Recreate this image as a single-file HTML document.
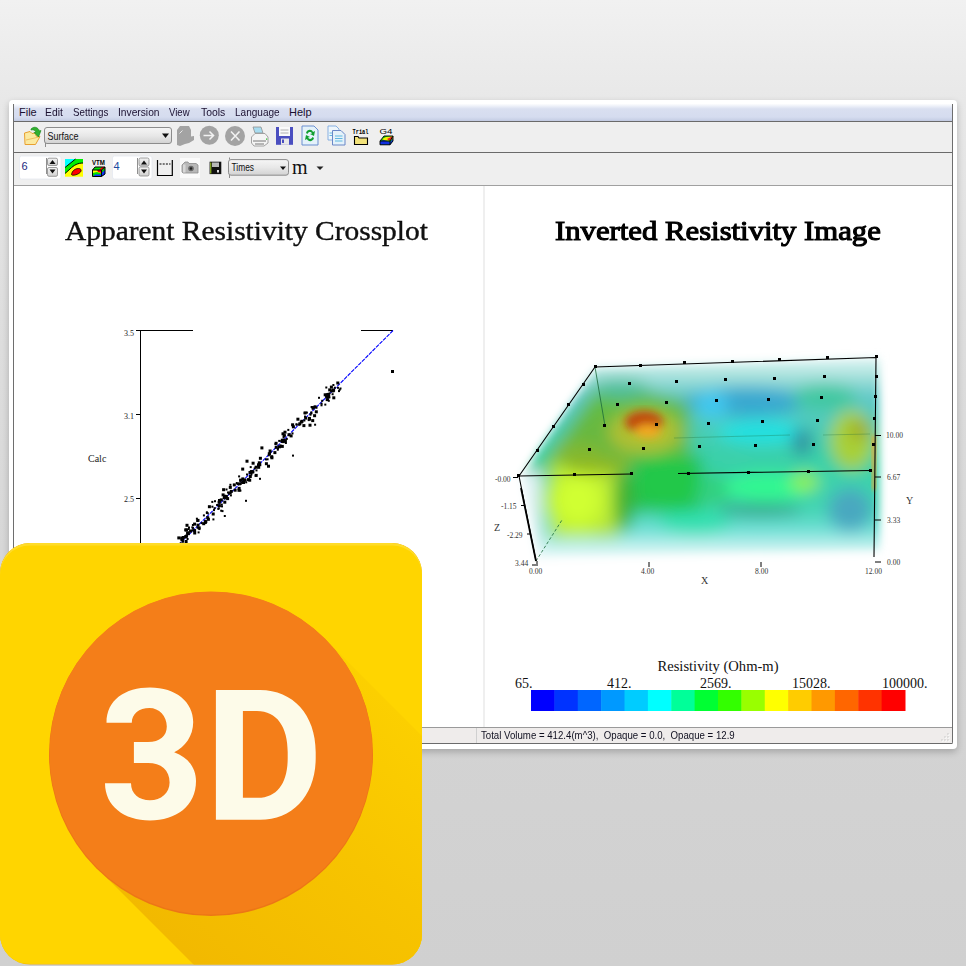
<!DOCTYPE html>
<html><head><meta charset="utf-8">
<style>
*{margin:0;padding:0;box-sizing:border-box}
html,body{width:966px;height:966px;overflow:hidden}
body{position:relative;background:linear-gradient(180deg,#f1f1f1 0px,#e8e8e8 100px,#dedede 315px,#d4d4d4 650px,#d0d0d0 966px);font-family:"Liberation Sans",sans-serif}
.a{position:absolute}
#win{left:9px;top:100px;width:948px;height:649px;background:#fff;border-radius:4px;box-shadow:0 3px 7px rgba(0,0,0,0.22)}
#frame{left:13px;top:104px;width:940px;height:640px;border-left:1px solid #6e6e6e;border-right:1px solid #6e6e6e;border-bottom:1px solid #6e6e6e;background:#fff;border-bottom-right-radius:2px}
#menu{left:14px;top:104px;width:938px;height:17px;background:linear-gradient(180deg,#fcfcfe 0,#eef1f9 2px,#d9dff0 5px,#d5dcef 13px,#c8d0e6 16px,#c0c8e0 17px)}
.mi{position:absolute;top:106px;font-size:11px;color:#1a1030;line-height:12px}
#l1{left:14px;top:121px;width:938px;height:1px;background:#6a6a6a}
#tb1{left:14px;top:122px;width:938px;height:30px;background:#efefef}
#l2{left:14px;top:152px;width:938px;height:1px;background:#6a6a6a}
#tb2{left:14px;top:153px;width:938px;height:32px;background:#efefef}
#l3{left:14px;top:185px;width:938px;height:1px;background:#a0a0a0}
#div{left:483px;top:186px;width:2px;height:541px;background:#efefef}
#l4{left:14px;top:727px;width:938px;height:1px;background:#9a9a9a}
#sb{left:14px;top:728px;width:938px;height:15px;background:#efeceb}
#l5{left:14px;top:743px;width:938px;height:1px;background:#6b6b6b}
.serif{font-family:"Liberation Serif",serif}
</style></head><body>
<div class="a" id="win"></div>
<div class="a" id="frame"></div>
<div class="a" id="menu"></div>
<div class="mi" style="left:19px;transform:scaleX(1.0);transform-origin:0 0">File</div>
<div class="mi" style="left:45px;transform:scaleX(0.94);transform-origin:0 0">Edit</div>
<div class="mi" style="left:73px;transform:scaleX(0.89);transform-origin:0 0">Settings</div>
<div class="mi" style="left:117.5px;transform:scaleX(0.93);transform-origin:0 0">Inversion</div>
<div class="mi" style="left:168.5px;transform:scaleX(0.87);transform-origin:0 0">View</div>
<div class="mi" style="left:200.5px;transform:scaleX(0.945);transform-origin:0 0">Tools</div>
<div class="mi" style="left:235px;transform:scaleX(0.913);transform-origin:0 0">Language</div>
<div class="mi" style="left:289px;transform:scaleX(1.0);transform-origin:0 0">Help</div>
<div class="a" id="l1"></div>
<div class="a" id="tb1"></div>
<div class="a" id="l2"></div>
<div class="a" id="tb2"></div>
<div class="a" id="l3"></div>
<div class="a" id="div"></div>
<div class="a" id="l4"></div>
<div class="a" id="sb"></div>
<div class="a" id="l5"></div>


<!-- CROSSPLOT -->
<svg class="a" style="left:0;top:0" width="966" height="966" id="cross">
 <g fill="none" stroke="#000" stroke-width="1">
  <path d="M140.5 330 V560 M136 330.5 H193 M361 330.5 H393 M136 414.5 H140 M136 498.5 H140"/>
 </g>
 <line x1="393" y1="330.5" x2="170" y2="553.5" stroke="#0000ff" stroke-width="1.1" stroke-dasharray="4,1"/>
 <g fill="#000"><rect x="227.9" y="492.7" width="2" height="2"/><rect x="195.9" y="517.7" width="2" height="2"/><rect x="267.8" y="452.2" width="3" height="3"/><rect x="284.9" y="442.0" width="2" height="2"/><rect x="305.9" y="411.6" width="2" height="2"/><rect x="181.9" y="537.1" width="2" height="2"/><rect x="244.5" y="479.4" width="2" height="2"/><rect x="185.8" y="544.3" width="2" height="2"/><rect x="186.6" y="538.0" width="2" height="2"/><rect x="237.5" y="488.8" width="3" height="3"/><rect x="250.3" y="472.2" width="2" height="2"/><rect x="287.5" y="433.2" width="3" height="3"/><rect x="330.2" y="389.6" width="2" height="2"/><rect x="255.5" y="469.4" width="2" height="2"/><rect x="207.9" y="505.2" width="3" height="3"/><rect x="189.2" y="529.5" width="3" height="3"/><rect x="197.7" y="526.4" width="3" height="3"/><rect x="246.0" y="473.5" width="2" height="2"/><rect x="280.8" y="444.9" width="3" height="3"/><rect x="308.5" y="423.7" width="3" height="3"/><rect x="326.9" y="392.9" width="3" height="3"/><rect x="308.0" y="417.6" width="3" height="3"/><rect x="202.2" y="522.2" width="3" height="3"/><rect x="311.8" y="406.1" width="3" height="3"/><rect x="307.9" y="416.9" width="3" height="3"/><rect x="180.4" y="538.3" width="3" height="3"/><rect x="265.0" y="458.4" width="2" height="2"/><rect x="228.7" y="491.4" width="3" height="3"/><rect x="324.3" y="403.6" width="2" height="2"/><rect x="211.7" y="512.5" width="3" height="3"/><rect x="282.7" y="434.2" width="3" height="3"/><rect x="222.1" y="488.2" width="3" height="3"/><rect x="274.7" y="445.7" width="3" height="3"/><rect x="273.4" y="451.1" width="3" height="3"/><rect x="184.2" y="528.4" width="3" height="3"/><rect x="180.2" y="536.6" width="3" height="3"/><rect x="184.2" y="535.3" width="3" height="3"/><rect x="296.4" y="417.7" width="3" height="3"/><rect x="278.2" y="439.9" width="2" height="2"/><rect x="295.4" y="423.3" width="2" height="2"/><rect x="225.5" y="488.5" width="2" height="2"/><rect x="197.6" y="531.4" width="2" height="2"/><rect x="267.0" y="464.7" width="3" height="3"/><rect x="339.5" y="387.5" width="2" height="2"/><rect x="223.3" y="500.7" width="3" height="3"/><rect x="313.6" y="405.3" width="3" height="3"/><rect x="204.3" y="520.1" width="3" height="3"/><rect x="249.7" y="466.1" width="2" height="2"/><rect x="181.5" y="542.5" width="2" height="2"/><rect x="270.4" y="456.3" width="3" height="3"/><rect x="227.0" y="491.5" width="2" height="2"/><rect x="250.4" y="473.5" width="2" height="2"/><rect x="232.8" y="483.4" width="3" height="3"/><rect x="330.2" y="390.3" width="2" height="2"/><rect x="254.7" y="473.9" width="3" height="3"/><rect x="323.7" y="393.3" width="3" height="3"/><rect x="291.5" y="432.4" width="2" height="2"/><rect x="213.0" y="509.1" width="2" height="2"/><rect x="331.7" y="388.9" width="3" height="3"/><rect x="211.3" y="500.9" width="2" height="2"/><rect x="328.6" y="392.4" width="2" height="2"/><rect x="331.4" y="389.4" width="3" height="3"/><rect x="196.6" y="526.8" width="2" height="2"/><rect x="188.0" y="526.5" width="2" height="2"/><rect x="218.0" y="499.0" width="3" height="3"/><rect x="303.6" y="411.4" width="3" height="3"/><rect x="245.2" y="481.3" width="2" height="2"/><rect x="205.9" y="512.0" width="2" height="2"/><rect x="179.7" y="542.3" width="2" height="2"/><rect x="233.6" y="488.7" width="3" height="3"/><rect x="221.0" y="505.4" width="2" height="2"/><rect x="320.6" y="402.7" width="2" height="2"/><rect x="282.6" y="436.4" width="2" height="2"/><rect x="329.9" y="385.6" width="3" height="3"/><rect x="185.2" y="534.9" width="2" height="2"/><rect x="236.5" y="483.1" width="2" height="2"/><rect x="283.8" y="434.3" width="2" height="2"/><rect x="204.1" y="519.8" width="2" height="2"/><rect x="216.1" y="504.0" width="2" height="2"/><rect x="193.1" y="522.6" width="3" height="3"/><rect x="259.0" y="477.8" width="2" height="2"/><rect x="184.4" y="535.3" width="2" height="2"/><rect x="177.3" y="536.4" width="3" height="3"/><rect x="268.6" y="449.5" width="3" height="3"/><rect x="206.9" y="517.8" width="3" height="3"/><rect x="202.9" y="514.4" width="2" height="2"/><rect x="211.4" y="505.7" width="2" height="2"/><rect x="298.3" y="422.3" width="3" height="3"/><rect x="336.3" y="381.5" width="3" height="3"/><rect x="274.5" y="443.0" width="2" height="2"/><rect x="270.2" y="455.2" width="3" height="3"/><rect x="311.7" y="407.8" width="2" height="2"/><rect x="254.7" y="474.7" width="2" height="2"/><rect x="218.5" y="500.4" width="2" height="2"/><rect x="206.8" y="512.3" width="2" height="2"/><rect x="325.7" y="393.2" width="3" height="3"/><rect x="186.2" y="532.1" width="3" height="3"/><rect x="280.2" y="440.1" width="2" height="2"/><rect x="300.5" y="419.8" width="3" height="3"/><rect x="338.7" y="388.7" width="2" height="2"/><rect x="328.3" y="396.5" width="2" height="2"/><rect x="223.8" y="515.0" width="2" height="2"/><rect x="250.6" y="470.5" width="3" height="3"/><rect x="292.0" y="454.6" width="2" height="2"/><rect x="217.6" y="500.8" width="3" height="3"/><rect x="212.4" y="518.4" width="2" height="2"/><rect x="196.5" y="523.7" width="3" height="3"/><rect x="259.0" y="462.6" width="2" height="2"/><rect x="189.2" y="530.2" width="2" height="2"/><rect x="242.0" y="481.0" width="3" height="3"/><rect x="203.8" y="521.0" width="3" height="3"/><rect x="182.0" y="540.6" width="2" height="2"/><rect x="326.9" y="398.6" width="2" height="2"/><rect x="320.5" y="404.3" width="2" height="2"/><rect x="193.2" y="531.5" width="3" height="3"/><rect x="303.7" y="412.1" width="2" height="2"/><rect x="218.7" y="501.6" width="2" height="2"/><rect x="274.6" y="441.8" width="3" height="3"/><rect x="281.1" y="441.0" width="2" height="2"/><rect x="313.1" y="414.2" width="3" height="3"/><rect x="181.8" y="536.0" width="3" height="3"/><rect x="295.8" y="423.7" width="2" height="2"/><rect x="217.8" y="507.3" width="2" height="2"/><rect x="251.6" y="461.7" width="3" height="3"/><rect x="239.4" y="489.6" width="2" height="2"/><rect x="243.3" y="478.5" width="3" height="3"/><rect x="222.7" y="497.2" width="2" height="2"/><rect x="249.9" y="470.1" width="3" height="3"/><rect x="200.7" y="522.1" width="2" height="2"/><rect x="269.1" y="451.2" width="2" height="2"/><rect x="228.8" y="485.9" width="3" height="3"/><rect x="260.4" y="446.4" width="3" height="3"/><rect x="193.1" y="529.1" width="3" height="3"/><rect x="191.9" y="524.0" width="2" height="2"/><rect x="310.6" y="406.0" width="2" height="2"/><rect x="278.0" y="445.3" width="3" height="3"/><rect x="239.5" y="479.9" width="2" height="2"/><rect x="242.3" y="479.8" width="2" height="2"/><rect x="282.5" y="438.9" width="3" height="3"/><rect x="279.5" y="444.4" width="2" height="2"/><rect x="332.3" y="396.3" width="3" height="3"/><rect x="220.8" y="503.6" width="2" height="2"/><rect x="251.4" y="470.3" width="3" height="3"/><rect x="266.6" y="458.3" width="2" height="2"/><rect x="185.1" y="528.5" width="3" height="3"/><rect x="287.3" y="428.9" width="2" height="2"/><rect x="193.8" y="530.0" width="2" height="2"/><rect x="221.6" y="493.4" width="3" height="3"/><rect x="258.9" y="456.8" width="3" height="3"/><rect x="264.9" y="462.2" width="3" height="3"/><rect x="331.6" y="393.2" width="2" height="2"/><rect x="257.8" y="461.3" width="3" height="3"/><rect x="217.3" y="507.9" width="2" height="2"/><rect x="277.0" y="447.4" width="2" height="2"/><rect x="187.7" y="528.0" width="2" height="2"/><rect x="298.3" y="423.7" width="2" height="2"/><rect x="235.8" y="482.0" width="2" height="2"/><rect x="220.2" y="509.7" width="2" height="2"/><rect x="268.9" y="453.1" width="2" height="2"/><rect x="245.5" y="459.7" width="3" height="3"/><rect x="337.0" y="386.8" width="2" height="2"/><rect x="248.5" y="471.0" width="3" height="3"/><rect x="333.8" y="386.7" width="2" height="2"/><rect x="187.8" y="533.1" width="2" height="2"/><rect x="237.6" y="486.9" width="3" height="3"/><rect x="327.8" y="399.8" width="2" height="2"/><rect x="307.7" y="419.1" width="2" height="2"/><rect x="241.3" y="477.4" width="3" height="3"/><rect x="309.5" y="413.7" width="2" height="2"/><rect x="325.3" y="386.5" width="2" height="2"/><rect x="327.2" y="394.9" width="3" height="3"/><rect x="247.0" y="478.1" width="3" height="3"/><rect x="248.8" y="475.0" width="3" height="3"/><rect x="198.4" y="528.1" width="2" height="2"/><rect x="291.1" y="423.3" width="3" height="3"/><rect x="185.5" y="523.8" width="3" height="3"/><rect x="304.2" y="416.6" width="3" height="3"/><rect x="291.9" y="425.3" width="3" height="3"/><rect x="332.4" y="384.0" width="2" height="2"/><rect x="318.0" y="396.8" width="2" height="2"/><rect x="224.5" y="495.4" width="3" height="3"/><rect x="310.3" y="411.4" width="2" height="2"/><rect x="332.1" y="388.6" width="3" height="3"/><rect x="275.2" y="446.5" width="2" height="2"/><rect x="283.9" y="439.2" width="3" height="3"/><rect x="238.1" y="475.4" width="2" height="2"/><rect x="281.5" y="432.3" width="3" height="3"/><rect x="224.3" y="497.4" width="2" height="2"/><rect x="241.2" y="467.6" width="3" height="3"/><rect x="191.8" y="529.2" width="2" height="2"/><rect x="223.2" y="495.3" width="3" height="3"/><rect x="181.6" y="542.9" width="2" height="2"/><rect x="229.9" y="494.4" width="2" height="2"/><rect x="187.8" y="531.6" width="2" height="2"/><rect x="254.6" y="465.7" width="3" height="3"/><rect x="325.1" y="394.8" width="3" height="3"/><rect x="182.1" y="538.6" width="2" height="2"/><rect x="285.8" y="437.9" width="2" height="2"/><rect x="214.0" y="500.2" width="2" height="2"/><rect x="229.4" y="483.8" width="2" height="2"/><rect x="338.0" y="390.1" width="2" height="2"/><rect x="328.2" y="388.4" width="3" height="3"/><rect x="245.0" y="499.8" width="2" height="2"/><rect x="326.8" y="396.5" width="2" height="2"/><rect x="184.6" y="540.0" width="3" height="3"/><rect x="289.6" y="434.4" width="3" height="3"/><rect x="253.7" y="467.4" width="2" height="2"/><rect x="257.2" y="465.8" width="3" height="3"/><rect x="229.8" y="489.9" width="3" height="3"/><rect x="303.4" y="419.5" width="2" height="2"/><rect x="304.0" y="415.6" width="2" height="2"/><rect x="237.9" y="482.3" width="3" height="3"/><rect x="280.8" y="438.7" width="3" height="3"/><rect x="249.6" y="471.0" width="2" height="2"/><rect x="276.8" y="448.7" width="2" height="2"/><rect x="325.7" y="398.1" width="3" height="3"/><rect x="314.8" y="410.3" width="3" height="3"/><rect x="221.5" y="510.1" width="2" height="2"/><rect x="206.2" y="516.2" width="3" height="3"/><rect x="321.2" y="399.8" width="2" height="2"/><rect x="219.8" y="498.4" width="3" height="3"/><rect x="315.5" y="406.7" width="2" height="2"/><rect x="226.1" y="497.1" width="3" height="3"/><rect x="240.6" y="481.7" width="2" height="2"/><rect x="267.8" y="454.3" width="2" height="2"/><rect x="311.2" y="419.1" width="3" height="3"/><rect x="239.7" y="483.0" width="2" height="2"/><rect x="213.6" y="507.2" width="2" height="2"/><rect x="310.4" y="412.4" width="2" height="2"/><rect x="257.0" y="463.3" width="3" height="3"/><rect x="283.5" y="430.7" width="3" height="3"/><rect x="311.7" y="406.7" width="2" height="2"/><rect x="239.1" y="478.6" width="3" height="3"/><rect x="192.0" y="526.9" width="2" height="2"/><rect x="191.3" y="526.4" width="2" height="2"/><rect x="281.9" y="440.1" width="3" height="3"/><rect x="185.0" y="534.7" width="3" height="3"/><rect x="196.5" y="518.9" width="3" height="3"/><rect x="217.9" y="504.2" width="3" height="3"/><rect x="223.0" y="494.8" width="3" height="3"/><rect x="325.6" y="395.8" width="2" height="2"/><rect x="299.8" y="420.5" width="3" height="3"/><rect x="224.8" y="494.9" width="3" height="3"/><rect x="186.3" y="531.4" width="3" height="3"/><rect x="258.3" y="463.2" width="3" height="3"/><rect x="205.9" y="511.3" width="2" height="2"/><rect x="314.1" y="423.7" width="2" height="2"/><rect x="302.4" y="424.1" width="3" height="3"/><rect x="248.2" y="478.7" width="3" height="3"/><rect x="196.3" y="520.0" width="2" height="2"/><rect x="391" y="370" width="3" height="3"/></g>
 <g font-family="Liberation Serif" font-size="8" fill="#222">
  <text x="124" y="336">3.5</text><text x="124" y="418.5">3.1</text><text x="124" y="502">2.5</text>
  <text x="88" y="462" font-size="10">Calc</text>
 </g>
</svg>

<!-- 3D PLOT -->
<svg class="a" style="left:0;top:0" width="966" height="966" id="vol">
 <defs>
  <filter id="bl" x="-20%" y="-20%" width="140%" height="140%"><feGaussianBlur stdDeviation="8"/></filter>
  <filter id="bl2" x="-20%" y="-20%" width="140%" height="140%"><feGaussianBlur stdDeviation="4"/></filter>
  <filter id="bl3" x="-50%" y="-20%" width="200%" height="140%"><feGaussianBlur stdDeviation="2"/></filter>
  <linearGradient id="vg" gradientUnits="userSpaceOnUse" x1="0" y1="355" x2="0" y2="560">
   <stop offset="0" stop-color="#e8f8f8"/><stop offset="0.1" stop-color="#a8e2dc"/><stop offset="0.2" stop-color="#60c8c8"/><stop offset="0.5" stop-color="#38d0a8"/><stop offset="0.75" stop-color="#40d4b0"/><stop offset="0.86" stop-color="#70e0d8"/><stop offset="0.95" stop-color="#d0f4f2"/><stop offset="1" stop-color="#f4fcfc"/></linearGradient>
  <mask id="vm" maskUnits="userSpaceOnUse" x="480" y="330" width="440" height="260">
    <polygon points="521,476 596,367 880,357 880,552 537,559" fill="#fff" filter="url(#bl2)"/>
  </mask>
 </defs>
 
 <g mask="url(#vm)">
  <g filter="url(#bl)">
   <rect x="470" y="340" width="420" height="240" fill="url(#vg)"/>
   <polygon points="538,472 597,386 640,390 690,402 690,462" fill="#62bc44"/>
   <ellipse cx="600" cy="440" rx="30" ry="25" fill="#68b840"/>
   <ellipse cx="620" cy="388" rx="28" ry="10" fill="#50c0a0"/>
   <ellipse cx="578" cy="452" rx="26" ry="10" fill="#80b830"/>
   <ellipse cx="745" cy="402" rx="60" ry="15" fill="#38a8d0"/>
   <ellipse cx="712" cy="405" rx="16" ry="14" fill="#40c8f0"/>
   <ellipse cx="762" cy="432" rx="45" ry="13" fill="#20e0e0"/>
   <ellipse cx="825" cy="397" rx="32" ry="13" fill="#40c8a0"/>
   <ellipse cx="802" cy="442" rx="10" ry="14" fill="#3090a0"/>
   <ellipse cx="645" cy="432" rx="36" ry="22" fill="#b0c030"/>
   <ellipse cx="852" cy="440" rx="22" ry="30" fill="#a8d038"/>
   <ellipse cx="860" cy="430" rx="10" ry="10" fill="#a0a820"/>
   <rect x="550" y="462" width="68" height="76" fill="#b0e040"/>
   <ellipse cx="578" cy="500" rx="34" ry="38" fill="#c0f030"/>
   <ellipse cx="578" cy="500" rx="22" ry="24" fill="#d0ff30"/>
   <ellipse cx="598" cy="466" rx="36" ry="8" fill="#90b820"/>
   <ellipse cx="624" cy="500" rx="10" ry="32" fill="#40b030"/>
   <rect x="632" y="456" width="70" height="56" fill="#28c050"/>
   <ellipse cx="712" cy="490" rx="22" ry="16" fill="#30d080"/>
   <ellipse cx="668" cy="482" rx="32" ry="28" fill="#20c848"/>
   <ellipse cx="695" cy="522" rx="36" ry="12" fill="#30e0b0"/>
   <ellipse cx="768" cy="487" rx="44" ry="14" fill="#30f890"/>
   <ellipse cx="805" cy="482" rx="14" ry="10" fill="#90f050"/>
   <ellipse cx="760" cy="510" rx="42" ry="7" fill="#38a890"/>
   <ellipse cx="850" cy="510" rx="22" ry="22" fill="#48a8c0"/>
   <polygon points="478,476 596,342 556,342 468,440" fill="#eaf8f8"/>
   <rect x="468" y="470" width="72" height="110" fill="#e8f4f8"/>
   <polygon points="470,350 520,350 520,476 536,560 470,560" fill="#eaf8f8"/>
  </g>
  <g filter="url(#bl2)">
   <ellipse cx="644" cy="422" rx="19" ry="11" fill="#c04a10"/>
   <ellipse cx="648" cy="431" rx="13" ry="7" fill="#f0a820"/>
  </g>
 </g>
 <polygon points="872.5,436 875.5,436 875.5,490 872.5,490" fill="#f0a020" filter="url(#bl3)"/>
 <g fill="none" stroke="#000" stroke-width="1.1">
  <path d="M519 476 L595 367 L876 357.5 L874 557 M519 476 L536 561 M519 476 L631.5 474 M678 473.5 L871 470.5"/>
 </g>
 <g fill="none" stroke="#1a6a3a" stroke-width="0.8">
  <path d="M595 367 L605 426" /><path d="M674 438 L790 435 M823 435 L870 434" stroke-opacity="0.5" stroke-width="0.6"/>
  <path d="M536 561 L562 520" stroke-dasharray="3,2"/>
 </g>
 <g fill="#000">
  <rect x="639" y="364" width="3" height="3"/><rect x="683" y="361" width="3" height="3"/><rect x="731" y="360" width="3" height="3"/><rect x="778" y="358" width="3" height="3"/><rect x="826" y="356" width="3" height="3"/><rect x="875" y="355" width="3" height="3"/>
  <rect x="536" y="449" width="3" height="3"/><rect x="552" y="425" width="3" height="3"/><rect x="567" y="403" width="3" height="3"/><rect x="582" y="383" width="3" height="3"/><rect x="594" y="365" width="3" height="3"/>
  <rect x="628" y="382" width="3" height="3"/><rect x="675" y="380" width="3" height="3"/><rect x="724" y="378" width="3" height="3"/><rect x="773" y="377" width="3" height="3"/><rect x="823" y="375" width="3" height="3"/>
  <rect x="616" y="403" width="3" height="3"/><rect x="665" y="401" width="3" height="3"/><rect x="715" y="399" width="3" height="3"/><rect x="767" y="398" width="3" height="3"/><rect x="820" y="396" width="3" height="3"/>
  <rect x="603" y="424" width="3" height="3"/><rect x="655" y="423" width="3" height="3"/><rect x="707" y="422" width="3" height="3"/><rect x="761" y="420" width="3" height="3"/><rect x="816" y="419" width="3" height="3"/>
  <rect x="588" y="448" width="3" height="3"/><rect x="642" y="447" width="3" height="3"/><rect x="698" y="445" width="3" height="3"/><rect x="754" y="444" width="3" height="3"/><rect x="812" y="443" width="3" height="3"/>
  <rect x="573" y="473" width="3" height="3"/><rect x="630" y="472" width="3" height="3"/><rect x="687" y="472" width="3" height="3"/><rect x="747" y="471" width="3" height="3"/><rect x="807" y="470" width="3" height="3"/><rect x="869" y="469" width="3" height="3"/>
  <rect x="517" y="474" width="3" height="3"/>
  <rect x="875" y="375" width="3" height="3"/><rect x="874" y="395" width="3" height="3"/><rect x="873" y="417" width="3" height="3"/><rect x="872" y="443" width="3" height="3"/>
 </g>
 <g font-family="Liberation Serif" font-size="7.5" fill="#333">
  <text x="495" y="481.5">-0.00</text><text x="501" y="509">-1.15</text><text x="507" y="538">-2.29</text><text x="515" y="566">3.44</text>
  <text x="494" y="531" font-size="10">Z</text>
  <text x="529" y="574">0.00</text><text x="641" y="574">4.00</text><text x="755" y="574">8.00</text><text x="865" y="574">12.00</text>
  <text x="701" y="584" font-size="10">X</text>
  <text x="886" y="438">10.00</text><text x="887" y="480">6.67</text><text x="887" y="523">3.33</text><text x="887" y="565">0.00</text>
  <text x="906" y="504" font-size="10">Y</text>
 </g>
 <g stroke="#000" stroke-width="1" fill="none"><path d="M875 435.5 H881 M875 477 H881 M875 520 H881 M875 562 H881 M649 562 V567 M761 562 V567 M513 477.5 H518 M521 505.5 H525 M527 534 H531 M532 565 H536 M537 561 V566"/><path d="M521 488 L536 561" stroke-width="1.8"/></g>
</svg>

<!-- COLORBAR -->
<svg class="a" style="left:0;top:0" width="966" height="966" id="cbar"><g font-family="Liberation Serif" font-size="14" fill="#111">
  <text x="657.5" y="671" textLength="121" lengthAdjust="spacingAndGlyphs">Resistivity (Ohm-m)</text>
  <text x="515" y="688">65.</text><text x="607" y="688">412.</text><text x="700" y="688">2569.</text><text x="792" y="688">15028.</text><text x="882" y="688">100000.</text>
 </g>
<rect x="531.00" y="690" width="23.88" height="21" fill="#0000ff"/><rect x="554.38" y="690" width="23.88" height="21" fill="#0033ff"/><rect x="577.75" y="690" width="23.88" height="21" fill="#0066ff"/><rect x="601.12" y="690" width="23.88" height="21" fill="#0099ff"/><rect x="624.50" y="690" width="23.88" height="21" fill="#00ccff"/><rect x="647.88" y="690" width="23.88" height="21" fill="#00ffff"/><rect x="671.25" y="690" width="23.88" height="21" fill="#00ff99"/><rect x="694.62" y="690" width="23.88" height="21" fill="#00ff33"/><rect x="718.00" y="690" width="23.88" height="21" fill="#33ff00"/><rect x="741.38" y="690" width="23.88" height="21" fill="#99ff00"/><rect x="764.75" y="690" width="23.88" height="21" fill="#ffff00"/><rect x="788.12" y="690" width="23.88" height="21" fill="#ffcc00"/><rect x="811.50" y="690" width="23.88" height="21" fill="#ff9900"/><rect x="834.88" y="690" width="23.88" height="21" fill="#ff6600"/><rect x="858.25" y="690" width="23.88" height="21" fill="#ff3300"/><rect x="881.62" y="690" width="23.88" height="21" fill="#ff0000"/>
 </svg>
<div class="a" style="left:476px;top:728px;width:1px;height:15px;background:#d0d0d0"></div>
<div class="a" style="left:481px;top:730px;font-size:10px;line-height:12px;color:#101020;white-space:nowrap;transform:scaleX(0.965);transform-origin:0 0">Total Volume = 412.4(m^3),&nbsp; Opaque = 0.0,&nbsp; Opaque = 12.9</div>

<svg class="a" style="left:938px;top:732px" width="14" height="11"><g fill="#fff"><rect x="10" y="2" width="1.5" height="1.5"/><rect x="7" y="5" width="1.5" height="1.5"/><rect x="10" y="5" width="1.5" height="1.5"/><rect x="4" y="8" width="1.5" height="1.5"/><rect x="7" y="8" width="1.5" height="1.5"/><rect x="10" y="8" width="1.5" height="1.5"/></g><g fill="#a8a8a8"><rect x="9.5" y="1.5" width="1" height="1"/><rect x="6.5" y="4.5" width="1" height="1"/><rect x="9.5" y="4.5" width="1" height="1"/><rect x="3.5" y="7.5" width="1" height="1"/><rect x="6.5" y="7.5" width="1" height="1"/><rect x="9.5" y="7.5" width="1" height="1"/></g></svg>
<!-- TOOLBARS -->
<svg class="a" style="left:0;top:0" width="966" height="200" id="tools">
 <defs>
  <linearGradient id="cbg" x1="0" y1="0" x2="0" y2="1"><stop offset="0" stop-color="#f6f6f6"/><stop offset="0.5" stop-color="#e8e8e8"/><stop offset="1" stop-color="#d2d2d2"/></linearGradient>
  <linearGradient id="spg" x1="0" y1="0" x2="0" y2="1"><stop offset="0" stop-color="#f4f4f4"/><stop offset="1" stop-color="#d0d0d0"/></linearGradient>
 </defs>
 <!-- folder open -->
 <path d="M24.5 133 L30 131.5 L32 133.5 L36 133 L36 136 L40 136.5 L35.5 144.5 L25 144.5 Z" fill="#fbe9a0" stroke="#e8a030" stroke-width="1"/>
 <path d="M26 140 L39 137" stroke="#f0c060" stroke-width="1"/>
 <path d="M31 129 C34 126, 38 127, 39.5 131 L41 130.5 L38.5 137 L34 132.5 L36 132 C35 130, 33 129.5, 31 130 Z" fill="#30b030" stroke="#108010" stroke-width="0.6"/>
 <!-- combobox Surface -->
 <rect x="44.5" y="127.5" width="127" height="16" rx="2.5" fill="url(#cbg)" stroke="#8c8c8c"/>
 <path d="M45.5 143 V147" stroke="#8c8c8c"/>
 <text x="47.5" y="139.5" font-family="Liberation Sans" font-size="10.5" fill="#111" textLength="31" lengthAdjust="spacingAndGlyphs">Surface</text>
 <path d="M162 133.5 H169 L165.5 138 Z" fill="#111"/>
 <!-- gray head -->
 <path d="M177 130 L180 126 H189 L191 130 L191 136.5 L194 136 L194 140 L189 143 L185 144 L180 146 L177 145 Z" fill="#a3a3a3"/>
 <path d="M179.5 133.5 L182.5 130.5" stroke="#e8e8e8" stroke-width="1"/>
 <!-- gray circle arrow -->
 <circle cx="209.3" cy="135.3" r="9.5" fill="#a3a3a3"/>
 <path d="M203.5 135.5 H213 M209.5 131.5 L213.5 135.5 L209.5 139.5" stroke="#f2f2f2" stroke-width="1.6" fill="none"/>
 <!-- gray circle x -->
 <circle cx="235" cy="136" r="10" fill="#a3a3a3"/>
 <path d="M231 131.5 L239.5 140.5 M239.5 131.5 L231 140.5" stroke="#f2f2f2" stroke-width="1.6"/>
 <!-- printer -->
 <path d="M253 127 H261 L263 133 H255 Z" fill="#a8dcf0" stroke="#909090" stroke-width="0.8"/>
 <path d="M251.5 137 L255 133.5 H265 L268 137 V143 L264 146 H254 L251.5 143 Z" fill="#f4f4f4" stroke="#9a9a9a" stroke-width="0.9"/>
 <path d="M253 141 H266 M255 144 H264" stroke="#6a6a6a" stroke-width="0.9"/>
 <rect x="266" y="138.5" width="1.2" height="1.2" fill="#20c020"/>
 <!-- floppy blue -->
 <rect x="276" y="127" width="17" height="17.8" fill="#4b4fc0"/>
 <rect x="279" y="127" width="11" height="9" fill="#fafafa"/>
 <path d="M280.5 130 H288.5 M280.5 133 H288.5" stroke="#a0a0a0" stroke-width="0.8"/>
 <rect x="281" y="138.5" width="8" height="6.3" fill="#e8e8e8"/>
 <rect x="282" y="139.5" width="2" height="3.5" fill="#4b4fc0"/>
 <!-- refresh doc -->
 <path d="M302 126 H314 L318 130 V145 H302 Z" fill="#e4f2fa" stroke="#6a8fd0" stroke-width="1"/>
 <path d="M306 133 C307 129, 312 129, 313 132 L315 131 L314 136 L310 134 L312 133.5 C311 131.5, 308.5 131.5, 307.5 134 Z" fill="#10a030"/>
 <path d="M314 138 C313 142, 308 142, 307 139 L305 140 L306 135 L310 137 L308 137.5 C309 139.5, 311.5 139.5, 312.5 137 Z" fill="#10a030"/>
 <!-- copy doc -->
 <path d="M328 126 H336 L339 129 V140 H328 Z" fill="#eef6fc" stroke="#7aa8e0" stroke-width="0.9"/>
 <path d="M332.5 130.5 H341 L345 134.5 V145 H332.5 Z" fill="#e4f2fa" stroke="#6a88c8" stroke-width="1"/>
 <path d="M335 136 H342.5 M335 138.5 H342.5 M335 141 H342.5 M329.5 133 H332 M329.5 135.5 H332" stroke="#60b8e0" stroke-width="1"/>
 <!-- Trial -->
 <text x="352.5" y="134" font-family="Liberation Mono" font-size="7.5" font-weight="bold" fill="#000" textLength="16" lengthAdjust="spacingAndGlyphs">Trial</text>
 <path d="M354.5 144.5 V136.5 H358 L359 138 H367.5 V144.5 Z" fill="#f2e27a" stroke="#000" stroke-width="1.1"/>
 <!-- G4 -->
 <text x="379.5" y="134" font-family="Liberation Sans" font-size="8" fill="#000" textLength="13" lengthAdjust="spacingAndGlyphs">G4</text>
 <path d="M380 141 L384 136 H393 V141 L390 144.8 H380 Z" fill="#10c010"/>
 <path d="M380 144.8 V141.5 L384 140 L390 142 L393 139 V141 L390 144.8 Z" fill="#1030e0"/>
 <path d="M382 139 L386 137 L393 136 L392 139 L388 141 L384 140 Z" fill="#f0f000"/>
 <path d="M387 139 L392 136.5 L392.5 139 L389 140.5 Z" fill="#f02020"/>
 <path d="M380 144.8 V141 L384 136 H393 V141 L390 144.8 Z M390 144.8 V141 H380 M390 141 L393 136" fill="none" stroke="#000" stroke-width="0.9"/>

 <!-- toolbar 2 -->
 <rect x="19.5" y="156" width="41.5" height="23" rx="2" fill="#fff" stroke="#e4e8f0" stroke-width="0.8"/>
 <text x="21.5" y="169.5" font-family="Liberation Sans" font-size="11" fill="#1a2a80">6</text>
 <path d="M46.5 158 V174" stroke="#909090"/>
 <rect x="47.5" y="158.2" width="10" height="7.3" rx="1.5" fill="url(#spg)" stroke="#888" stroke-width="0.8"/>
 <rect x="47.5" y="167.5" width="10" height="8.8" rx="1.5" fill="url(#spg)" stroke="#888" stroke-width="0.8"/>
 <path d="M49.5 164 L52.5 160 L55.5 164 Z M49.5 169.5 H55.5 L52.5 173.5 Z" fill="#111"/>
 <!-- contour -->
 <rect x="65" y="159" width="18" height="17.7" fill="#ffff00"/>
 <path d="M65 159 H83 V163 C78 163, 74 165, 70 169 L65 173.5 Z" fill="#00f000"/>
 <path d="M65 159 H75.5 L65 167.5 Z" fill="#00ffff"/>
 <path d="M65 167.5 L75.5 159 M65 173.5 L70 169 C74 165, 78 163, 83 163" stroke="#000" stroke-width="1" fill="none"/>
 <path d="M71.5 174.5 C72 171, 75 168.5, 78.5 168.5 C81.5 168.5, 82 171, 79.5 173 C77 175, 72 176, 71.5 174.5 Z" fill="#ff0000" stroke="#000" stroke-width="0.8"/>
 <!-- VTM -->
 <text x="92" y="165" font-family="Liberation Sans" font-size="7.5" font-weight="bold" fill="#000" textLength="13" lengthAdjust="spacingAndGlyphs">VTM</text>
 <path d="M92.5 176.5 V170 H101.5 V176.5 Z" fill="#ffff00"/>
 <path d="M92.5 173 L97 172 L101.5 173.5 V176.5 H92.5 Z" fill="#00e000"/>
 <path d="M93 176.5 L95 174.5 H101.5 V176.5 Z" fill="#1030ff"/>
 <path d="M97 170 H101.5 V173 L98 172 Z" fill="#ff0000"/>
 <path d="M92.5 170 L95 167 H105 L101.5 170 Z" fill="#00e000"/>
 <path d="M99 170 L102 167 H105 L101.5 170 Z" fill="#ff0000"/>
 <path d="M101.5 170 L105 167 V174 L101.5 176.5 Z" fill="#00c000"/>
 <path d="M101.5 173 L105 170 V174 L101.5 176.5 Z" fill="#1030ff"/>
 <path d="M92.5 176.5 V170 H101.5 V176.5 Z M92.5 170 L95 167 H105 L101.5 170 M105 167 V174 L101.5 176.5" fill="none" stroke="#000" stroke-width="1"/>
 <!-- spinbox 2 -->
 <rect x="112.5" y="156" width="39.5" height="23" rx="2" fill="#fff" stroke="#e4e8f0" stroke-width="0.8"/>
 <text x="113.5" y="170" font-family="Liberation Sans" font-size="11" fill="#1a4aa0">4</text>
 <path d="M137.5 158 V174" stroke="#909090"/>
 <rect x="139" y="158" width="10" height="8" rx="1.5" fill="url(#spg)" stroke="#888" stroke-width="0.8"/>
 <rect x="139" y="167" width="10" height="9" rx="1.5" fill="url(#spg)" stroke="#888" stroke-width="0.8"/>
 <path d="M141 164.5 L144 160.5 L147 164.5 Z M141 169.5 H147 L144 173.5 Z" fill="#111"/>
 <!-- bracket -->
 <path d="M157.5 160 V175.5 H172.3 V160" fill="none" stroke="#000" stroke-width="1.2"/>
 <path d="M159.5 164 H170.5" stroke="#000" stroke-width="1.2" stroke-dasharray="2,1.2"/>
 <!-- camera -->
 <rect x="180" y="158" width="20" height="20" fill="#fafafa"/>
 <path d="M182 165 L185 162 H188 L189 163.5 H196 L198 165 V173 H183 L182 172 Z" fill="#b8b8b8" stroke="#8a8a8a" stroke-width="0.8"/>
 <rect x="183" y="164.5" width="2.5" height="8" fill="#d8d8d8"/>
 <circle cx="191" cy="168.5" r="2.8" fill="#6a6a6a"/><circle cx="191" cy="168.5" r="1.2" fill="#222"/>
 <!-- small floppy -->
 <rect x="209.6" y="161.7" width="11.7" height="12.4" fill="#111"/>
 <rect x="212" y="162.5" width="7" height="4.5" fill="#b8b8b8"/>
 <rect x="210" y="162.5" width="1.4" height="11" fill="#80a020"/>
 <rect x="217" y="170" width="2" height="2.5" fill="#ddd"/>
 <!-- Times combobox -->
 <rect x="228.5" y="159.6" width="60" height="15.6" rx="2.5" fill="url(#cbg)" stroke="#8c8c8c"/>
 <path d="M229.5 157.5 V159.6 M229.5 175 V178" stroke="#8c8c8c"/>
 <text x="231.5" y="171" font-family="Liberation Sans" font-size="10" fill="#111" textLength="22.5" lengthAdjust="spacingAndGlyphs">Times</text>
 <path d="M280 166.5 H286 L283 170 Z" fill="#111"/>
 <text x="292" y="173.5" font-family="Liberation Serif" font-size="20" fill="#111">m</text>
 <path d="M316.5 166.5 H323.5 L320 170 Z" fill="#222"/>
</svg>
<!-- TITLES -->
<div class="a serif" id="t1" style="left:65px;top:215px;font-size:27.5px;transform:scaleX(1.07);transform-origin:0 0;-webkit-text-stroke:0.35px #000;color:#111;white-space:nowrap">Apparent Resistivity Crossplot</div>
<div class="a serif" id="t2" style="left:555px;top:215px;font-size:27.5px;transform:scaleX(1.117);transform-origin:0 0;-webkit-text-stroke:1.1px #000;color:#000;white-space:nowrap">Inverted Resistivity Image</div>

<!-- ICON -->
<svg class="a" style="left:0;top:0" width="966" height="966">
  <defs>
    <linearGradient id="shg" x1="0" y1="0" x2="1" y2="1">
      <stop offset="0" stop-color="#f2b800" stop-opacity="1"/>
      <stop offset="1" stop-color="#ffd400" stop-opacity="1"/>
    </linearGradient>
    <linearGradient id="shg2" gradientUnits="userSpaceOnUse" x1="200" y1="964" x2="430" y2="690"><stop offset="0" stop-color="#f2b900"/><stop offset="0.5" stop-color="#f7c400"/><stop offset="1" stop-color="#fdd200"/></linearGradient>
    <clipPath id="icl"><rect x="0" y="543" width="422" height="421.5" rx="30" ry="30"/></clipPath>
  </defs>
  <rect x="0" y="543" width="422" height="421.5" rx="30" ry="30" fill="#f0b400"/>
  <g clip-path="url(#icl)"><rect x="0" y="543" width="422" height="420.5" rx="30" ry="30" fill="#ffdc2a"/><rect x="0" y="545.5" width="422" height="418" rx="30" ry="30" fill="#ffd500"/><rect x="0" y="575" width="422" height="388.5" fill="#ffd500"/></g>
  <g clip-path="url(#icl)">
    <polygon points="325.5,639.5 700,1014 243,1014 96.5,867.5" fill="url(#shg2)"/>
  </g>
  
  <circle cx="211" cy="754" r="162" fill="#ec7616"/>
  <circle cx="211" cy="753" r="161.5" fill="#f47e19"/>
</svg>
<svg class="a" style="left:0;top:0" width="966" height="966" id="g3d"><path fill="#fdfbe9" fill-rule="evenodd" d="M106.5 722.7 C106.5 700 125 687.5 150 687.5 C176 687.5 193.2 702 193.2 722 C193.2 736 185 747 174.2 752.2 C188 757 196 768 196 781 C196 806 176 820.5 150 820.5 C124 820.5 105 806 105 783.3 L131 783.3 C131 794 139 800.3 150 800.3 C161 800.3 169.6 793 169.6 782.5 C169.6 770 161 763 148 763 L133.9 763 L133.9 742.1 L148 742.1 C160 742.1 166.8 736 166.8 726.6 C166.8 716 159 708 149.5 708 C139 708 131.8 714 131.8 722.7 Z M215.9 690.1 L260 690.1 C293 690.1 315.7 715 315.7 752 L315.7 758 C315.7 795 293 819.8 260 819.8 L215.9 819.8 Z M242.9 711 L242.9 797.8 L258 797.8 C278 797.8 287.7 782 287.7 758 L287.7 752 C287.7 727 277 711 257 711 Z"/></svg>
</body></html>
